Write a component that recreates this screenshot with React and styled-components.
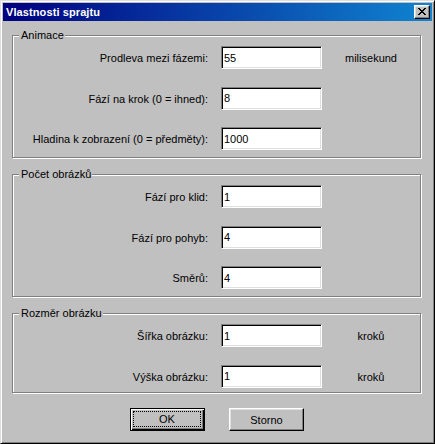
import React from "react";
import styled, { createGlobalStyle } from "styled-components";

const GlobalStyle = createGlobalStyle`
  html, body {
    margin: 0;
    padding: 0;
    background: #c0c0c0;
  }
  body {
    font-family: "Liberation Sans", Arial, sans-serif;
    font-size: 11px;
    color: #000;
  }
`;

const Window = styled.div`
  width: 435px;
  height: 444px;
  box-sizing: border-box;
  background: #c0c0c0;
  border: 1px solid;
  border-color: #dfdfdf #000 #000 #dfdfdf;
  box-shadow: inset 1px 1px 0 #fff, inset -1px -1px 0 #808080;
  padding: 2px;
  display: flex;
  flex-direction: column;
`;

const TitleBar = styled.div`
  height: 18px;
  display: flex;
  align-items: center;
  justify-content: space-between;
  background: linear-gradient(to right, #000080, #1084d0);
  padding: 0 2px 0 3px;

  .caption {
    color: #fff;
    font-weight: bold;
    font-size: 11px;
    letter-spacing: 0.1px;
  }
`;

const CloseBtn = styled.div`
  width: 16px;
  height: 14px;
  box-sizing: border-box;
  background: #c0c0c0;
  border: 1px solid;
  border-color: #fff #000 #000 #fff;
  box-shadow: inset -1px -1px 0 #808080, inset 1px 1px 0 #dfdfdf;
  display: flex;
  align-items: center;
  justify-content: center;

  svg {
    display: block;
    margin: 0 1px 1px 0;
  }
`;

const Body = styled.div`
  flex: 1;
  padding: 14px 11px 0 9px;
  display: flex;
  flex-direction: column;
`;

const Group = styled.div`
  position: relative;
  width: 409px;
  box-sizing: border-box;
  border: 1px solid #808080;
  box-shadow: 1px 1px 0 #fff, inset 1px 1px 0 #fff;
  padding: 10px 0 ${(p) => p.$bottom}px 0;
  margin-bottom: ${(p) => p.$gap}px;
  display: grid;
  grid-template-columns: 195px 101px 72px;
  column-gap: 13px;
  row-gap: 17.5px;
  grid-auto-rows: 23px;
  align-items: center;
`;

const Legend = styled.span`
  position: absolute;
  top: -7px;
  left: 6px;
  line-height: 13px;
  padding: 0 1px 0 2px;
  background: #c0c0c0;
`;

const Label = styled.span`
  text-align: right;
  white-space: nowrap;
  padding-top: 1px;
`;

const Field = styled.input`
  width: 101px;
  height: 23px;
  box-sizing: border-box;
  margin: 0;
  border: 1px solid;
  border-color: #808080 #fff #fff #808080;
  box-shadow: inset 1px 1px 0 #000, inset -1px -1px 0 #dfdfdf;
  background: #fff;
  padding: 0 0 0 2px;
  font-family: "Liberation Sans", Arial, sans-serif;
  font-size: 11px;
  color: #000;
  outline: none;
`;

const Unit = styled.span`
  text-align: center;
  padding-top: 1px;
`;

const Buttons = styled.div`
  display: flex;
  justify-content: center;
  gap: 24px;
  padding-left: 1px;
  margin-top: 15px;
`;

const Button = styled.div`
  width: 75px;
  height: 23px;
  box-sizing: border-box;
  display: flex;
  padding: ${(p) => (p.$default ? "2px 3px 3px 2px" : "2px")};
  border: 1px solid;
  border-color: ${(p) => (p.$default ? "#000" : "#fff #000 #000 #fff")};
  box-shadow: ${(p) =>
    p.$default
      ? "inset 1px 1px 0 #fff, inset -1px -1px 0 #000, inset -2px -2px 0 #808080"
      : "inset -1px -1px 0 #808080, inset 1px 1px 0 #dfdfdf"};

  span {
    flex: 1;
    display: flex;
    align-items: center;
    justify-content: center;
    border: 1px dotted ${(p) => (p.$default ? "#000" : "transparent")};
    padding-top: 1px;
  }
`;

const groups = [
  {
    title: "Animace",
    bottom: 7,
    gap: 16,
    rows: [
      ["Prodleva mezi fázemi:", "55", "milisekund"],
      ["Fází na krok (0 = ihned):", "8"],
      ["Hladina k zobrazení (0 = předměty):", "1000"],
    ],
  },
  {
    title: "Počet obrázků",
    bottom: 7,
    gap: 16,
    rows: [
      ["Fází pro klid:", "1"],
      ["Fází pro pohyb:", "4"],
      ["Směrů:", "4"],
    ],
  },
  {
    title: "Rozměr obrázku",
    bottom: 4,
    gap: 0,
    rows: [
      ["Šířka obrázku:", "1", "kroků"],
      ["Výška obrázku:", "1", "kroků"],
    ],
  },
];

export default function App() {
  return (
    <>
      <GlobalStyle />
      <Window>
        <TitleBar>
          <span className="caption">Vlastnosti sprajtu</span>
          <CloseBtn>
            <svg width="8" height="7" viewBox="0 0 8 7">
              <path
                d="M0 0h2v1h1v1h2V1h1V0h2v1H7v1H6v1H5v1h1v1h1v1h1v1H6V6H5V5H3v1H2v1H0V6h1V5h1V4h1V3H2V2H1V1H0z"
                fill="#000"
              />
            </svg>
          </CloseBtn>
        </TitleBar>
        <Body>
          {groups.map((g) => (
            <Group key={g.title} $bottom={g.bottom} $gap={g.gap}>
              <Legend>{g.title}</Legend>
              {g.rows.map(([label, value, unit]) => (
                <React.Fragment key={label}>
                  <Label>{label}</Label>
                  <Field defaultValue={value} />
                  <Unit>{unit || ""}</Unit>
                </React.Fragment>
              ))}
            </Group>
          ))}
          <Buttons>
            <Button $default>
              <span>OK</span>
            </Button>
            <Button>
              <span>Storno</span>
            </Button>
          </Buttons>
        </Body>
      </Window>
    </>
  );
}
